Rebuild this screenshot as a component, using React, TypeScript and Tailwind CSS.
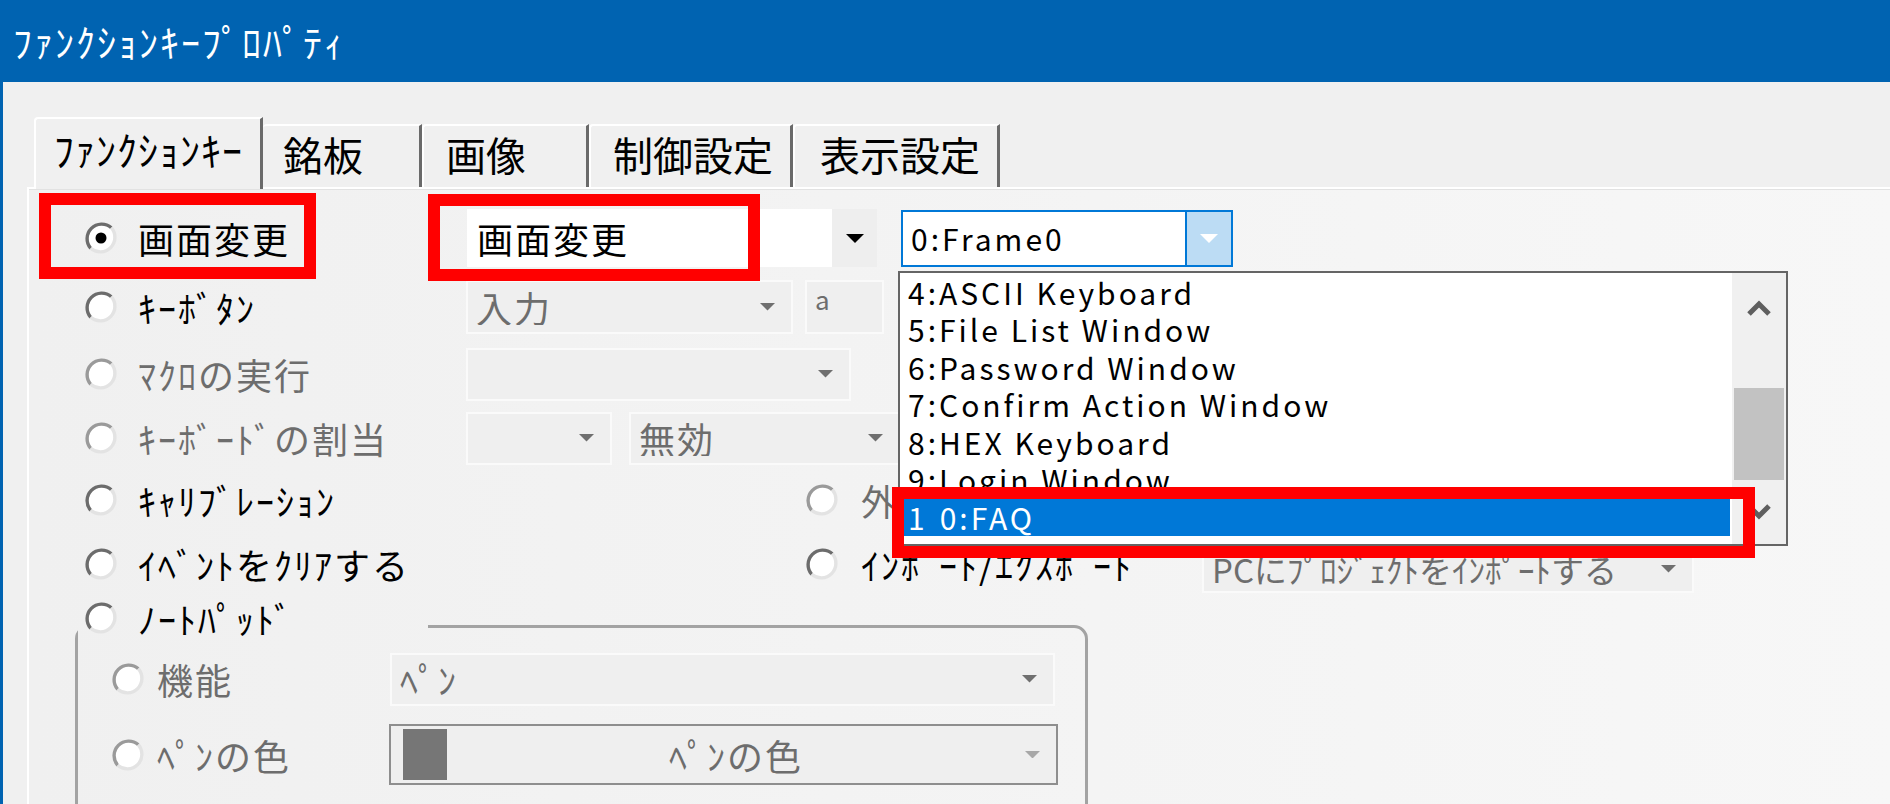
import React from "react";

const FONT = "font-['Noto_Sans_CJK_JP','Noto_Sans',sans-serif]";

type RadioProps = { checked?: boolean; disabled?: boolean };

// Classic sunken radio button: dark upper-left arc, light lower-right arc.
function Radio({ checked = false, disabled = false }: RadioProps) {
  const dark = disabled ? "#9a9a9a" : "#6c6c6c";
  return (
    <svg width="34" height="34" viewBox="0 0 34 34" className="shrink-0">
      <circle cx="17" cy="17" r="14.5" fill="#ffffff" />
      <path d="M6.7 27.3A14.6 14.6 0 0 1 27.3 6.7" fill="none" stroke={dark} strokeWidth="3.4" />
      <path d="M27.3 6.7A14.6 14.6 0 0 1 6.7 27.3" fill="none" stroke="#e3e3e3" strokeWidth="3.4" />
      {checked && <circle cx="17" cy="17" r="5.5" fill="#000000" />}
    </svg>
  );
}

function Caret({ color, width = 16 }: { color: string; width?: number }) {
  return (
    <svg width={width} height={width / 2} viewBox="0 0 16 8" className="shrink-0">
      <path d="M0 0H16L8 8Z" fill={color} />
    </svg>
  );
}

// Disabled (flat) combo box
function FlatCombo({
  box,
  text,
  caret = "#6f6f6f",
  textClass = "",
}: {
  box: string;
  text?: string;
  caret?: string;
  textClass?: string;
}) {
  return (
    <div className={`flex items-center border-2 border-[#fafafa] bg-[#efefef] pl-[8px] pr-[16px] text-[#6d6d6d] ${box}`}>
      <span className={`flex-1 overflow-hidden whitespace-nowrap ${textClass}`}>{text}</span>
      <Caret color={caret} width={15} />
    </div>
  );
}

function Label({ text, disabled = false, checked = false }: { text: string; disabled?: boolean; checked?: boolean }) {
  return (
    <div className="flex w-[382px] shrink-0 items-center gap-[20px]">
      <Radio checked={checked} disabled={disabled} />
      <span className={`whitespace-nowrap ${disabled ? "text-[#6d6d6d]" : "text-black"}`}>{text}</span>
    </div>
  );
}

const screens = [
  "4:ASCII Keyboard",
  "5:File List Window",
  "6:Password Window",
  "7:Confirm Action Window",
  "8:HEX Keyboard",
  "9:Login Window",
];

export default function App() {
  return (
    <div className={`relative flex h-[804px] w-[1890px] flex-col overflow-hidden bg-[#f0f0f0] ${FONT}`}>
      {/* window caption */}
      <div className="flex h-[82px] shrink-0 items-center bg-[#0063b1] pl-[13px] text-[38px] leading-none tracking-[2px] text-white">
        ﾌｧﾝｸｼｮﾝｷｰﾌﾟﾛﾊﾟﾃｨ
      </div>

      <div className="flex min-h-0 flex-1 flex-col border-l-[3px] border-[#0063b1] pl-[24px] pt-[35px]">
        {/* tab strip */}
        <div className="relative z-10 flex h-[70px] items-end pl-[7px] text-[40px] leading-none text-black">
          <div className="-mb-[2px] flex h-[72px] w-[229px] items-center rounded-tl-[4px] border-l-2 border-t-2 border-r-[3px] border-white border-r-[#6a6a6a] bg-[#f0f0f0] pb-[10px] pl-[18px] tracking-[1px]">
            ﾌｧﾝｸｼｮﾝｷｰ
          </div>
          <div className="flex h-[63px] w-[159px] items-center rounded-tl-[4px] border-t-2 border-r-[3px] border-white border-r-[#6a6a6a] pb-[6px] pl-[20px]">
            銘板
          </div>
          <div className="flex h-[63px] w-[167px] items-center rounded-tl-[4px] border-l-2 border-t-2 border-r-[3px] border-white border-r-[#6a6a6a] pb-[6px] pl-[22px]">
            画像
          </div>
          <div className="flex h-[63px] w-[204px] items-center rounded-tl-[4px] border-l-2 border-t-2 border-r-[3px] border-white border-r-[#6a6a6a] pb-[6px] pl-[22px]">
            制御設定
          </div>
          <div className="flex h-[63px] w-[207px] items-center rounded-tl-[4px] border-l-2 border-t-2 border-r-[3px] border-white border-r-[#6a6a6a] pb-[6px] pl-[25px]">
            表示設定
          </div>
        </div>

        {/* tab page */}
        <div className="flex flex-1 flex-col border-l-2 border-t-2 border-white bg-linear-to-r from-[#f0f0f0] to-[#f7f7f7] pl-[55px] pt-[18px] text-[36px] leading-none tracking-[2px] shadow-[inset_0_1px_0_#e2e2e2]">
          {/* 画面変更 */}
          <div className="flex h-[62px] items-center">
            <Label text="画面変更" checked />
            <div className="ml-[1px] flex h-[58px] w-[410px] bg-white">
              <span className="flex flex-1 items-center pl-[10px] text-black">画面変更</span>
              <div className="flex w-[45px] items-center justify-center bg-[#eeeeee]">
                <Caret color="#000000" width={18} />
              </div>
            </div>
            <div className="ml-[24px] flex h-[57px] w-[332px] border-2 border-[#0078d7] bg-white">
              <span className="flex flex-1 items-center pl-[8px] text-[30px] tracking-[3px] text-black">0:Frame0</span>
              <div className="flex w-[46px] items-center justify-center border-l-2 border-[#0078d7] bg-[#bcdcf4]">
                <Caret color="#ffffff" width={18} />
              </div>
            </div>
          </div>

          {/* キーボタン */}
          <div className="mt-[9px] flex h-[58px] items-center">
            <Label text="ｷｰﾎﾞﾀﾝ" />
            <FlatCombo box="h-[54px] w-[327px]" text="入力" />
            <div className="ml-[12px] h-[54px] w-[79px] border-2 border-[#fafafa] bg-[#efefef] pl-[8px] pt-[4px] text-[26px] text-[#6d6d6d]">
              a
            </div>
          </div>

          {/* マクロの実行 */}
          <div className="mt-[10px] flex h-[56px] items-center">
            <Label text="ﾏｸﾛの実行" disabled />
            <FlatCombo box="h-[53px] w-[385px]" />
          </div>

          {/* キーボードの割当 */}
          <div className="mt-[8px] flex h-[56px] items-center">
            <Label text="ｷｰﾎﾞｰﾄﾞの割当" disabled />
            <FlatCombo box="h-[53px] w-[146px]" />
            <FlatCombo box="ml-[17px] h-[53px] w-[272px]" text="無効" />
          </div>

          {/* キャリブレーション */}
          <div className="mt-[6px] flex h-[56px] items-center">
            <Label text="ｷｬﾘﾌﾞﾚｰｼｮﾝ" />
            <div className="ml-[339px] flex items-center gap-[22px]">
              <Radio disabled />
              <span className="whitespace-nowrap text-[#6d6d6d]">外部ｷｰﾎﾞｰﾄﾞ</span>
            </div>
          </div>

          {/* イベントをクリアする */}
          <div className="mt-[8px] flex h-[56px] items-center">
            <Label text="ｲﾍﾞﾝﾄをｸﾘｱする" />
            <div className="ml-[339px] flex w-[397px] items-center gap-[22px]">
              <Radio />
              <span className="whitespace-nowrap text-black">ｲﾝﾎﾟｰﾄ/ｴｸｽﾎﾟｰﾄ</span>
            </div>
            <FlatCombo
              box="h-[48px] w-[492px] self-end -mb-[1px]"
              text="PCにﾌﾟﾛｼﾞｪｸﾄをｲﾝﾎﾟｰﾄする"
              textClass="text-[33px] tracking-[0px]"
            />
          </div>

          {/* ノートパッド group */}
          <fieldset className="-ml-[9px] mt-[8px] h-[260px] w-[1013px] rounded-[14px] border-[3px] border-[#a3a3a3]">
            <legend className="h-[52px] w-[350px] pl-[6px]">
              <div className="flex h-[36px] items-center gap-[20px]">
                <Radio />
                <span className="whitespace-nowrap text-black">ﾉｰﾄﾊﾟｯﾄﾞ</span>
              </div>
            </legend>
            <div className="flex h-[54px] items-center pl-[33px]">
              <div className="flex w-[279px] items-center gap-[12px]">
                <Radio disabled />
                <span className="text-[#6d6d6d]">機能</span>
              </div>
              <FlatCombo box="h-[53px] w-[665px]" text="ﾍﾟﾝ" />
            </div>
            <div className="mt-[18px] flex h-[61px] items-center pl-[33px]">
              <div className="flex w-[278px] items-center gap-[12px]">
                <Radio disabled />
                <span className="whitespace-nowrap text-[#6d6d6d]">ﾍﾟﾝの色</span>
              </div>
              <div className="flex h-[61px] w-[669px] items-center border-2 border-[#8e8e8e] bg-[#efefef] pl-[12px] pr-[16px]">
                <div className="h-[51px] w-[44px] bg-[#767676]" />
                <span className="flex-1 text-center text-[#6d6d6d]">ﾍﾟﾝの色</span>
                <Caret color="#a8a8a8" width={15} />
              </div>
            </div>
          </fieldset>
        </div>
      </div>

      {/* open drop-down list of the screen combo */}
      <div className="absolute left-[898px] top-[271px] flex h-[275px] w-[890px] border-2 border-[#656565] bg-white">
        <div className="flex-1 px-[2px] text-[30px] leading-none tracking-[3px] text-black">
          {screens.map((s) => (
            <div key={s} className="flex h-[37.5px] items-center whitespace-nowrap pl-[6px]">
              {s}
            </div>
          ))}
          <div className="flex h-[37.5px] items-center whitespace-nowrap bg-[#0078d7] pl-[6px] text-white">
            <span className="mr-[12px]">1</span>0:FAQ
          </div>
        </div>
        <div className="flex w-[54px] flex-col bg-[#f0f0f0]">
          <div className="flex h-[70px] items-center justify-center">
            <svg width="28" height="18" viewBox="0 0 28 18">
              <path d="M4 15L14 5L24 15" fill="none" stroke="#5f5f5f" strokeWidth="5" />
            </svg>
          </div>
          <div className="h-[45px]" />
          <div className="mx-[2px] h-[92px] bg-[#c2c2c2]" />
          <div className="flex flex-1 items-center justify-center">
            <svg width="28" height="18" viewBox="0 0 28 18">
              <path d="M4 3L14 13L24 3" fill="none" stroke="#5f5f5f" strokeWidth="5" />
            </svg>
          </div>
        </div>
      </div>

      {/* red highlight frames */}
      <div className="absolute left-[39px] top-[193px] h-[86px] w-[277px] border-[12px] border-[#ff0000]" />
      <div className="absolute left-[428px] top-[194px] h-[87px] w-[332px] border-[12px] border-[#ff0000]" />
      <div className="absolute left-[892px] top-[487px] h-[71px] w-[863px] border-[12px] border-[#ff0000]" />
    </div>
  );
}
